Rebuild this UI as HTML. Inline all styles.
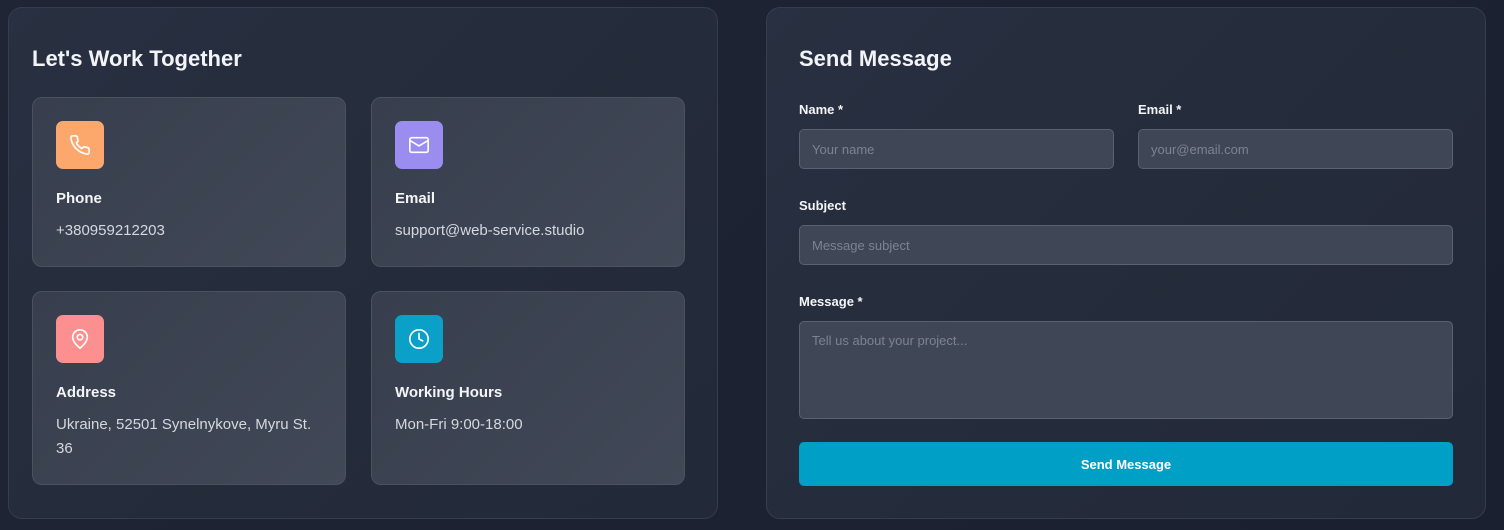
<!DOCTYPE html><html><head><style>
*{box-sizing:border-box;margin:0;padding:0}
body{width:1504px;height:530px;background:linear-gradient(135deg,#1f2535,#1a2030);font-family:"Liberation Sans",sans-serif;position:relative;overflow:hidden;color:#fff}
.panel{position:absolute;top:7px;height:512px;border:1px solid #363d4c;border-radius:14px;background:linear-gradient(135deg,#283041,#242b3a 60%,#222939)}
h2{position:absolute;left:23px;top:38px;font-size:22px;font-weight:bold;color:#f2f4f7}
.card{position:absolute;width:314px;border:1px solid #4a5160;border-radius:10px;background:linear-gradient(135deg,#373e4d,#414857)}
.ic{position:absolute;left:23px;top:23px;width:48px;height:48px;border-radius:7px;display:flex;align-items:center;justify-content:center}
.ct{position:absolute;left:23px;top:92px;font-size:15px;font-weight:bold;color:#f4f5f7}
.cv{position:absolute;left:23px;top:121px;font-size:15px;color:#d5d8de;line-height:24px;width:265px}
.lb{position:absolute;font-size:13px;font-weight:bold;color:#f4f5f7}
.in{position:absolute;height:40px;border:1px solid #5a6170;border-radius:5px;background:#3f4655;font-size:13px;color:#7c8391;padding:12px 12px}
.btn{position:absolute;left:32px;top:434px;width:654px;height:44px;border-radius:5px;background:#00a0c6;color:#fff;font-size:13px;font-weight:bold;display:flex;align-items:center;justify-content:center}
</style></head><body>
<div class="panel" style="left:8px;width:710px">
<h2>Let's Work Together</h2>
<div class="card" style="left:23px;top:89px;height:170px"><div class="ic" style="background:#fca86d"><svg width="22" height="22" viewBox="0 0 24 24" fill="none" stroke="#fff" stroke-width="1.8" stroke-linecap="round" stroke-linejoin="round"><path d="M22 16.9v3a2 2 0 0 1-2.2 2 19.8 19.8 0 0 1-8.6-3.1 19.5 19.5 0 0 1-6-6A19.8 19.8 0 0 1 2.1 4.2 2 2 0 0 1 4.1 2h3a2 2 0 0 1 2 1.7c.1.9.4 1.8.7 2.7a2 2 0 0 1-.5 2.1L8 9.8a16 16 0 0 0 6 6l1.3-1.3a2 2 0 0 1 2.1-.4c.9.3 1.8.6 2.7.7a2 2 0 0 1 1.7 2z"/></svg></div><div class="ct">Phone</div><div class="cv">+380959212203</div></div>
<div class="card" style="left:362px;top:89px;height:170px"><div class="ic" style="background:#9b8cf0"><svg width="22" height="22" viewBox="0 0 24 24" fill="none" stroke="#fff" stroke-width="1.8" stroke-linecap="round" stroke-linejoin="round"><rect x="2" y="4" width="20" height="16" rx="2"/><path d="M22 7l-10 6L2 7"/></svg></div><div class="ct">Email</div><div class="cv">support@web-service.studio</div></div>
<div class="card" style="left:23px;top:283px;height:194px"><div class="ic" style="background:#fc8f8f"><svg width="22" height="22" viewBox="0 0 24 24" fill="none" stroke="#fff" stroke-width="1.8" stroke-linecap="round" stroke-linejoin="round"><path d="M20 10c0 6-8 12-8 12S4 16 4 10a8 8 0 0 1 16 0z"/><circle cx="12" cy="10" r="3"/></svg></div><div class="ct">Address</div><div class="cv">Ukraine, 52501 Synelnykove, Myru St. 36</div></div>
<div class="card" style="left:362px;top:283px;height:194px"><div class="ic" style="background:#0ba0c8"><svg width="22" height="22" viewBox="0 0 24 24" fill="none" stroke="#fff" stroke-width="1.8" stroke-linecap="round" stroke-linejoin="round"><circle cx="12" cy="12" r="10"/><path d="M12 6v6l4 2"/></svg></div><div class="ct">Working Hours</div><div class="cv">Mon-Fri 9:00-18:00</div></div>
</div>
<div class="panel" style="left:766px;width:720px">
<h2 style="left:32px">Send Message</h2>
<div class="lb" style="left:32px;top:94px">Name *</div>
<div class="lb" style="left:371px;top:94px">Email *</div>
<div class="in" style="left:32px;top:121px;width:315px">Your name</div>
<div class="in" style="left:371px;top:121px;width:315px">your@email.com</div>
<div class="lb" style="left:32px;top:190px">Subject</div>
<div class="in" style="left:32px;top:217px;width:654px">Message subject</div>
<div class="lb" style="left:32px;top:286px">Message *</div>
<div class="in" style="left:32px;top:313px;width:654px;height:98px;padding-top:11px">Tell us about your project...</div>
<div class="btn">Send Message</div>
</div>
</body></html>
